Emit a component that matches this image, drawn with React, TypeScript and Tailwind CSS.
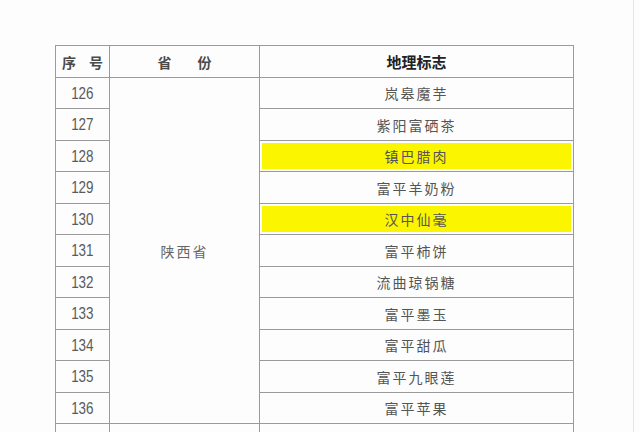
import React from 'react';

interface Item {
  no: number;
  name: string;
  highlight?: boolean;
}

const items: Item[] = [
  { no: 126, name: '岚皋魔芋' },
  { no: 127, name: '紫阳富硒茶' },
  { no: 128, name: '镇巴腊肉', highlight: true },
  { no: 129, name: '富平羊奶粉' },
  { no: 130, name: '汉中仙毫', highlight: true },
  { no: 131, name: '富平柿饼' },
  { no: 132, name: '流曲琼锅糖' },
  { no: 133, name: '富平墨玉' },
  { no: 134, name: '富平甜瓜' },
  { no: 135, name: '富平九眼莲' },
  { no: 136, name: '富平苹果' },
];

// row heights so the lines land where the scan has them
const rowHeights = ['h-[31px]', 'h-[32px]', 'h-[31px]', 'h-[32px]', 'h-[31px]', 'h-[32px]', 'h-[31px]', 'h-[32px]', 'h-[31px]', 'h-[32px]', 'h-[31px]'];

const cjk = { fontFamily: '"Noto Sans CJK SC", "Noto Sans", sans-serif' };
const num = { fontFamily: '"Liberation Sans", Arial, sans-serif' };

const App: React.FC = () => {
  return (
    <div className="w-[640px] h-[432px] overflow-hidden bg-[#fdfdfd]">
      <div className="w-[634px] h-full border-r border-[#e6e6e6] pt-[45px] pl-[55px]">
        <table className="w-[519px] border-collapse table-fixed" style={cjk}>
          <colgroup>
            <col className="w-[54px]" />
            <col className="w-[150px]" />
            <col />
          </colgroup>
          <tbody>
            <tr className="h-[32px]">
              <td className="border border-[#9a9a9a] p-0 text-center text-[14px] font-bold text-[#4a4a4a] leading-none">
                序<span className="inline-block w-[13px]"></span>号
              </td>
              <td className="border border-[#9a9a9a] p-0 text-center text-[14px] font-bold text-[#4a4a4a] leading-none">
                省<span className="inline-block w-[26px]"></span>份
              </td>
              <td className="border border-[#9a9a9a] p-0 text-center text-[15px] font-bold text-[#222] leading-none">
                地理标志
              </td>
            </tr>
            {items.map((it, i) => (
              <tr key={it.no} className={rowHeights[i]}>
                <td className="border border-[#9a9a9a] p-0 pt-[1px] text-center text-[16px] text-[#5a5a5a] leading-none" style={num}>
                  <span className="inline-block scale-x-[0.84]">{it.no}</span>
                </td>
                {i === 0 && (
                  <td rowSpan={items.length} className="border border-[#9a9a9a] p-0 text-center align-middle text-[14px] tracking-[2px] text-[#666] leading-none">
                    陕西省
                  </td>
                )}
                <td
                  className={`border border-[#9a9a9a] p-0 text-center text-[14px] tracking-[2px] text-[#555] leading-none ${
                    it.highlight ? 'bg-[#fbf500] shadow-[inset_0_0_0_2px_#fdfdfd]' : ''
                  }`}
                >
                  {it.name}
                </td>
              </tr>
            ))}
            <tr className="h-[31px]">
              <td className="border border-[#9a9a9a] p-0"></td>
              <td className="border border-[#9a9a9a] p-0"></td>
              <td className="border border-[#9a9a9a] p-0 pt-[10px] text-center text-[14px] tracking-[2px] text-[#555] leading-none">
                岷县当归饮片
              </td>
            </tr>
          </tbody>
        </table>
      </div>
    </div>
  );
};

export default App;
